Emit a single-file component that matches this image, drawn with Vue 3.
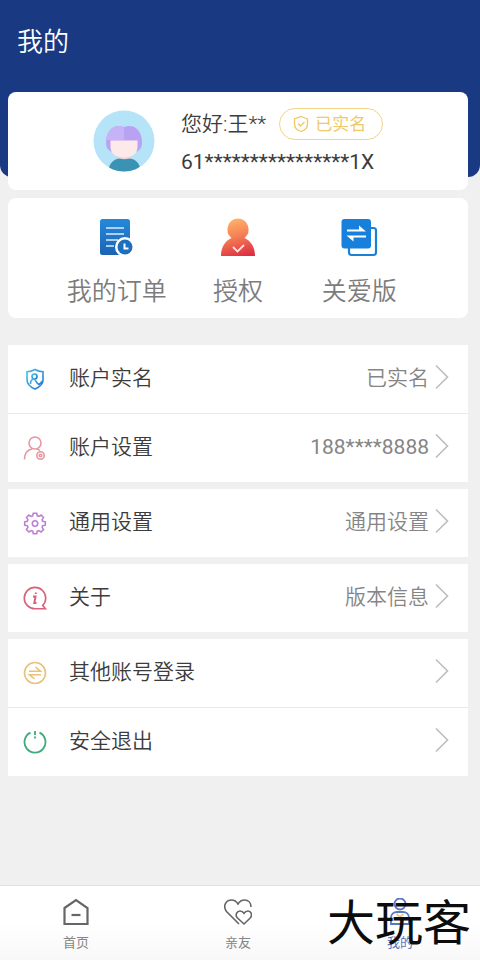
<script setup>
const groups = [
  [
    { icon: 'shield', label: '账户实名', value: '已实名' },
    { icon: 'user', label: '账户设置', value: '188****8888', numeric: true },
  ],
  [{ icon: 'gear', label: '通用设置', value: '通用设置' }],
  [{ icon: 'info', label: '关于', value: '版本信息' }],
  [
    { icon: 'swap', label: '其他账号登录', value: '' },
    { icon: 'power', label: '安全退出', value: '' },
  ],
]
</script>

<template>
  <div class="page">
    <header class="header">
      <h1 class="title">我的</h1>
    </header>

    <main class="content">
      <section class="card profile">
        <svg class="avatar" viewBox="0 0 62 62" aria-hidden="true">
          <defs>
            <clipPath id="avatar-clip"><circle cx="31" cy="31" r="30.5" /></clipPath>
          </defs>
          <g clip-path="url(#avatar-clip)">
            <rect width="62" height="62" fill="#b5e3f8" />
            <path d="M25 42h13v8H25z" fill="#e9d3dc" />
            <path d="M15.500 62c0-8 5-13 10.500-13.500q5 1.500 11 0c6 .5 10.500 5.500 10.500 13.500z" fill="#3a93b5" />
            <path d="M31 17C20 13 13 22 13 32c0 5 2 8.500 5 9.500h26c3-1 5-4.500 5-9.500 0-10-7-19-18-15z" fill="#b9a2f1" />
            <path d="M31 17C20 13 13 22 13 32l1 -2h17z" fill="#c6b3f7" />
            <path d="M17.500 30.500h27V37c0 7-6 10.500-13.500 10.500S17.500 44 17.500 37z" fill="#fde8ea" />
          </g>
        </svg>
        <div class="identity">
          <div class="greeting">
            <span class="name">您好:王**</span>
            <span class="badge">
              <svg class="badge-icon" viewBox="0 0 16 18" aria-hidden="true">
                <path d="M8 1.500 14.500 4v5c0 4-3 6.500-6.500 7.500C4.500 15.500 1.500 13 1.500 9V4z" />
                <path d="m5 8.500 2.500 2.500L11.500 7" />
              </svg>
              已实名
            </span>
          </div>
          <div class="id-number">61****************1X</div>
        </div>
      </section>

      <nav class="card shortcuts" aria-label="快捷入口">
        <a class="shortcut" href="#orders">
          <svg class="shortcut-icon" viewBox="0 0 40 40" aria-hidden="true">
            <defs>
              <linearGradient id="order-fill" x1="0" y1="0" x2="0" y2="1">
                <stop offset="0" stop-color="#2589da" />
                <stop offset="1" stop-color="#1c63b3" />
              </linearGradient>
            </defs>
            <rect x="3" y="1" width="30" height="36" rx="2.500" fill="url(#order-fill)" />
            <path d="M9 10h18M9 16h18M9 22h12M9 28h8" stroke="#d8edff" stroke-width="1.700" />
            <circle cx="28" cy="29" r="10" fill="#fff" />
            <circle cx="28" cy="29" r="7.500" fill="#1d6fbe" />
            <path d="M27.500 25.500v5h4" fill="none" stroke="#fff" stroke-width="2" />
          </svg>
          <span>我的订单</span>
        </a>
        <a class="shortcut" href="#authorize">
          <svg class="shortcut-icon" viewBox="0 0 40 40" aria-hidden="true">
            <defs>
              <linearGradient id="auth-fill" gradientUnits="userSpaceOnUse" x1="14" y1="1" x2="24" y2="39">
                <stop offset="0" stop-color="#ffb36b" />
                <stop offset="0.450" stop-color="#f58055" />
                <stop offset="1" stop-color="#dd2e43" />
              </linearGradient>
            </defs>
            <path d="M20 0.500a11 11 0 0 1 6.500 19.500C33 23 37 29 37 38H3c0-9 4-15 10.500-18A11 11 0 0 1 20 .5z" fill="url(#auth-fill)" />
            <path d="m15 29 4.500 4.500L26 27" fill="none" stroke="#ffe4dc" stroke-width="1.800" />
          </svg>
          <span>授权</span>
        </a>
        <a class="shortcut" href="#care">
          <svg class="shortcut-icon" viewBox="0 0 40 40" aria-hidden="true">
            <rect x="10" y="10" width="27" height="27" rx="2.500" fill="#fff" stroke="#1a7fd6" stroke-width="2.200" />
            <rect x="2.500" y="1" width="29.500" height="29.500" rx="3" fill="#1780dc" />
            <path d="M8 13.500h19L20 7.500v4H8zM27 17.500H7.500l7 6v-4H27z" fill="#fff" />
          </svg>
          <span>关爱版</span>
        </a>
      </nav>

      <div class="groups">
        <ul v-for="(group, index) in groups" :key="index" class="group">
          <li v-for="item in group" :key="item.label" class="item">
            <button type="button" class="row">
              <svg v-if="item.icon === 'shield'" class="row-icon blue" viewBox="0 0 24 24" aria-hidden="true">
                <defs>
                  <linearGradient id="shield-line" x1="0" y1="0" x2="1" y2="1">
                    <stop offset="0" stop-color="#46c3e6" />
                    <stop offset="1" stop-color="#256fd2" />
                  </linearGradient>
                </defs>
                <g stroke="url(#shield-line)">
                  <path d="M12 2.500c3 1.800 5 2.200 8 2.200v8c0 4.500-3.500 7.300-8 9.300-4.500-2-8-4.800-8-9.300v-8c3 0 5-.4 8-2.200z" />
                  <circle cx="11.500" cy="9.500" r="2.500" />
                  <path d="M7.500 17c0-3 1.500-5 4-5l3 4.500 1.500 1 4-4" />
                </g>
              </svg>
              <svg v-else-if="item.icon === 'user'" class="row-icon pink" viewBox="0 0 24 24" aria-hidden="true">
                <circle cx="12" cy="7" r="6" />
                <path d="M1.500 23.500c0-6 3-9.700 8-10.700" />
                <path d="M13.500 13q2 .3 3.500 1.500" />
                <circle cx="17.500" cy="19.500" r="3.700" />
                <circle cx="17.500" cy="19.500" r="1.300" />
              </svg>
              <svg v-else-if="item.icon === 'gear'" class="row-icon purple" viewBox="0 0 24 24" aria-hidden="true">
                <path d="M9.700 4.800 10.300 2.200h3.400l.6 2.600 1.500.6 2.300-1.400 2.400 2.400-1.400 2.300.6 1.500 2.600.6v3.400l-2.600.6-.6 1.500 1.400 2.300-2.400 2.400-2.300-1.400-1.500.6-.6 2.600h-3.400l-.6-2.600-1.500-.6-2.300 1.400-2.400-2.400 1.400-2.300-.6-1.500-2.600-.6v-3.400l2.600-.6.600-1.500-1.400-2.300 2.400-2.400 2.300 1.400z" />
                <circle cx="12" cy="12.500" r="2.700" />
              </svg>
              <svg v-else-if="item.icon === 'info'" class="row-icon red" viewBox="0 0 24 24" aria-hidden="true">
                <path d="M22.500 22.800H12A10.700 10.700 0 1 1 22.700 12c0 3-1 5.500-3 7.500z" />
                <path d="M10 10.500h2.500L11.300 17h2.200M12.800 6.500v1.500" stroke-width="2" />
              </svg>
              <svg v-else-if="item.icon === 'swap'" class="row-icon yellow" viewBox="0 0 24 24" aria-hidden="true">
                <circle cx="12" cy="12" r="10.500" />
                <path d="M6 10.300h11.500L12.500 6M18 13.700H6.500l5 4.300" />
              </svg>
              <svg v-else class="row-icon green" viewBox="0 0 24 24" aria-hidden="true">
                <path d="M7.500 2.600a10.500 10.500 0 1 0 9 0" />
                <path d="M12 1v4M12 6.500v2" />
              </svg>
              <span class="row-label">{{ item.label }}</span>
              <span class="row-value" :class="{ numeric: item.numeric }">{{ item.value }}</span>
              <svg class="chevron" viewBox="0 0 14 26" aria-hidden="true">
                <path d="m1 1.500 11.500 11.500L1 24.500" />
              </svg>
            </button>
          </li>
        </ul>
      </div>
    </main>

    <nav class="tabbar" aria-label="主导航">
      <a class="tab" href="#home">
        <svg class="tab-icon" viewBox="0 0 28 28" aria-hidden="true">
          <path d="M2.500 10 14 2l11.500 8v16h-23z" />
          <path d="M9.500 17h9" />
        </svg>
        <span>首页</span>
      </a>
      <a class="tab" href="#family">
        <svg class="tab-icon thin" viewBox="0 0 28 28" aria-hidden="true">
          <path d="M15 26 2.500 13.500C-1.500 8 2 2 7.500 2c3 0 5 1.500 6.500 4 1.500-2.500 3.500-4 6.500-4 4 0 6.500 3 6.500 7" />
          <path d="M20 26 13 19.500c-2-3 0-6.500 3-6.500 1.900 0 3.200 1 4 2.200.8-1.200 2.100-2.200 4-2.200 3 0 4.500 3.500 2.700 6.500z" />
        </svg>
        <span>亲友</span>
      </a>
      <a class="tab active" href="#mine" aria-current="page">
        <svg class="tab-icon" viewBox="0 0 28 28" aria-hidden="true">
          <circle cx="14" cy="6" r="5.500" />
          <path d="M5 26v-6c0-4 3-6 6-6h6c3 0 6 2 6 6v6z" />
          <path d="m10.500 16 3.500 3 3.500-3" class="accent" />
        </svg>
        <span>我的</span>
      </a>
      <span class="watermark">大玩客</span>
    </nav>
  </div>
</template>

<style>
body {
  background: #f0f0f0;
}
</style>

<style scoped>
.page {
  display: flex;
  flex-direction: column;
  min-height: 100vh;
  background: #f0f0f0;
  color: #3c3c3c;
  font-family: Roboto, "Noto Sans CJK SC", sans-serif;
  font-size: 21px;
  font-weight: 350;
  line-height: 32px;
}

.header {
  padding: 22px 17px 115px;
  border-radius: 0 0 12px 12px;
  background: #193983;
}

.title {
  margin: 0;
  color: #fff;
  font-size: 26px;
  font-weight: 350;
  line-height: 40px;
}

.content {
  flex: 1;
  margin-top: -85px;
  padding: 0 12px 24px 8px;
}

.card {
  border-radius: 8px;
  background: #fff;
}

.profile {
  display: flex;
  align-items: flex-start;
  gap: 26px;
  padding: 16px 16px 12px 85px;
}

.avatar {
  flex: none;
  width: 62px;
  height: 66px;
}

.identity {
  display: flex;
  flex-direction: column;
  gap: 6px;
}

.greeting {
  display: flex;
  align-items: center;
  gap: 13px;
}

.badge {
  display: flex;
  align-items: center;
  gap: 6px;
  box-sizing: border-box;
  height: 32px;
  padding: 0 16px 0 13px;
  border: 1px solid #f3d58a;
  border-radius: 16px;
  color: #efc96a;
  font-size: 17px;
  font-weight: 400;
  line-height: 32px;
}

.badge-icon {
  width: 16px;
  height: 18px;
  fill: none;
  stroke: #f0c766;
  stroke-width: 1.3;
}

.id-number,
.numeric {
  font-weight: 400;
}

.shortcuts {
  display: grid;
  grid-template-columns: repeat(3, 1fr);
  margin-top: 8px;
  padding: 20px 48px 6px;
}

.shortcut {
  display: flex;
  flex-direction: column;
  align-items: center;
  gap: 14px;
  color: #7c7c7c;
  font-size: 25px;
  line-height: 40px;
  text-decoration: none;
  white-space: nowrap;
}

.shortcut-icon {
  width: 40px;
  height: 40px;
}

.groups {
  display: flex;
  flex-direction: column;
  gap: 7px;
  margin-top: 27px;
}

.group {
  margin: 0;
  padding: 0;
  background: #fff;
  list-style: none;
}

.item + .item {
  border-top: 1px solid #e9e9e9;
}

.row {
  display: flex;
  align-items: center;
  width: 100%;
  height: 68px;
  padding: 0 19px 0 15px;
  border: 0;
  background: none;
  color: inherit;
  font: inherit;
  text-align: left;
}

.row-icon {
  flex: none;
  width: 24px;
  height: 24px;
  margin-right: 22px;
  fill: none;
  stroke: currentColor;
  stroke-width: 1.6;
}

.blue { color: #3192d8; }
.pink { color: #e697a2; }
.purple { color: #bd80d5; }
.red { color: #d9627a; }
.yellow { color: #eac17c; }
.green { color: #41aa7b; stroke-width: 1.8; }

.row-label,
.row-value {
  padding-bottom: 2px;
}

.row-value {
  margin-left: auto;
  color: #858585;
}

.chevron {
  flex: none;
  width: 14px;
  height: 26px;
  margin-left: 6px;
  padding-bottom: 4px;
  fill: none;
  stroke: #bdbdbd;
  stroke-width: 1.6;
}

.tabbar {
  position: relative;
  display: flex;
  justify-content: space-between;
  padding: 12px 56px 7px 52px;
  border-top: 1px solid #e0e0e0;
  background: linear-gradient(#fff 50%, #f8f8f8);
}

.tab {
  display: flex;
  flex-direction: column;
  align-items: center;
  gap: 7px;
  width: 48px;
  color: #858585;
  font-size: 13px;
  font-weight: 400;
  line-height: 20px;
  text-decoration: none;
}

.tab-icon {
  width: 28px;
  height: 28px;
  fill: none;
  stroke: #666;
  stroke-width: 2.2;
}

.thin {
  stroke-width: 1.6;
}

.active {
  color: #5675bd;
}

.active .tab-icon {
  stroke: #5877c2;
  stroke-width: 1.8;
}

.active .accent {
  stroke: #ecc88a;
}

.watermark {
  position: absolute;
  right: 9px;
  bottom: 8px;
  color: #0c0c0c;
  font-size: 48px;
  font-weight: 400;
  line-height: 56px;
  pointer-events: none;
}
</style>
